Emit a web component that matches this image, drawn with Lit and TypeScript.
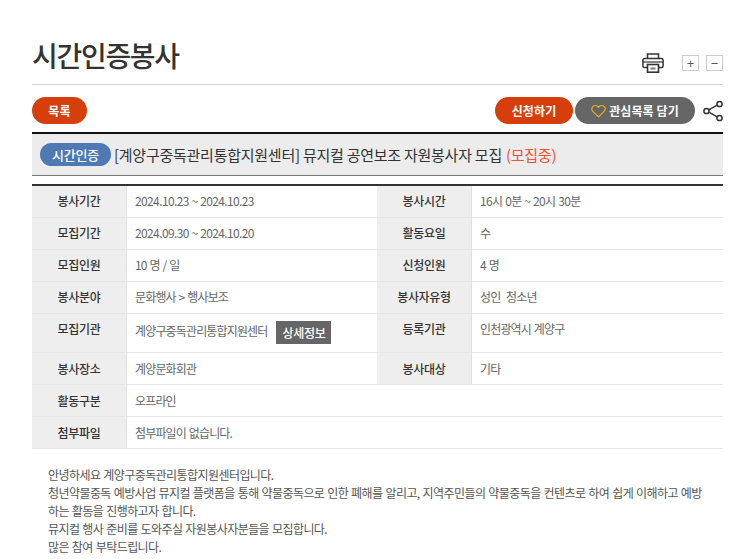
import { LitElement, html, css } from "lit";
import { customElement } from "lit/decorators.js";

@customElement("app-root")
export class AppRoot extends LitElement {
  static styles = css`
    :host { display: block; font-family: "Noto Sans CJK KR", "Noto Sans", sans-serif; color: #333; }
    .page { padding: 0 20px 0 32px; height: 559px; overflow: hidden; box-sizing: border-box; }
    .head { display: flex; align-items: flex-end; height: 84px; border-bottom: 1px solid #d2d2d2; box-sizing: content-box; }
    h1 { margin: 0 auto 0 0; font-size: 28px; font-weight: 500; letter-spacing: -1.3px; line-height: 40px; padding-bottom: 9px; color: #333; }
    .tools { display: flex; align-items: center; padding-bottom: 11px; }
    .printer { width: 22px; height: 20px; margin-right: 18px; display: block; }
    .zoom { width: 17px; height: 16px; box-sizing: border-box; border: 1px solid #ccc; background: #fff; display: flex; align-items: center; justify-content: center; margin-left: 7px; color: #555; font-size: 13px; line-height: 1; font-family: "Liberation Sans", sans-serif; }
    .printer + .zoom { margin-left: 0; }
    .actions { display: flex; align-items: center; height: 27px; margin-top: 12px; }
    .btn { height: 27px; border-radius: 14px; color: #fff; font-size: 12px; font-weight: 700; display: flex; align-items: center; justify-content: center; letter-spacing: 0.1px; box-sizing: border-box; }
    .red { background: #d63f0c; }
    .list { width: 55px; margin-right: auto; }
    .apply { width: 78px; margin-right: 2px; }
    .gray { background: #666; width: 120px; gap: 3px; }
    .share { width: 20px; height: 22px; margin-left: 8px; display: block; }
    .heart { width: 15px; height: 14px; display: block; }
    .subject { margin-top: 8px; height: 41px; box-sizing: content-box; border-top: 2px solid #111; border-bottom: 1px solid #777; background: #ececec; display: flex; align-items: center; padding-left: 8px; font-size: 15px; letter-spacing: -0.25px; color: #333; white-space: pre; }
    .tag { width: 71px; height: 23px; border-radius: 12px; background: #4f79b2; color: #fff; font-size: 13px; font-weight: 500; display: flex; align-items: center; justify-content: center; margin-right: 3px; flex: none; letter-spacing: -0.2px; }
    .status { color: #f0533a; margin-left: 4px; }
    table { border-collapse: separate; border-spacing: 0; width: 691px; table-layout: fixed; margin-top: 8px; border-top: 2px solid #333; font-size: 12px; letter-spacing: -0.85px; word-spacing: 1px; }
    th, td { border-bottom: 1px solid #e6e6e6; box-sizing: border-box; height: 32px; padding: 0 0 2px 0; }
    th { background: #eee; font-weight: 500; color: #333; text-align: center; border-right: 1px solid #e0e0e0; letter-spacing: -0.3px; }
    td { padding-left: 8px; color: #666; }
    td.date { letter-spacing: -0.62px; word-spacing: 0.6px; }
    .low td, .low th { padding-bottom: 0; }
    .org td, .org th { height: 39px; vertical-align: top; padding-top: 5px; padding-bottom: 0; line-height: 20px; }
    .org td.hasbtn { padding-top: 7px; }
    .cell { display: flex; align-items: flex-start; line-height: 20px; }
    .detail { background: #666; color: #fff; font-weight: 500; height: 23px; width: 55px; display: flex; align-items: center; justify-content: center; margin-left: 9px; flex: none; letter-spacing: -0.3px; }
    .body { margin: 17px 0 0 16px; width: 656px; font-size: 12px; line-height: 18px; color: #555; letter-spacing: -0.57px; word-spacing: 0.8px; }
    .body p { margin: 0; }
  `;

  render() {
    const r = (a: string, b: string, c: string, d: string, dl = false, dr = false) => html`<tr><th>${a}</th><td class=${dl ? "date" : ""}>${b}</td><th>${c}</th><td class=${dr ? "date" : ""}>${d}</td></tr>`;
    return html`<div class="page">
      <div class="head">
        <h1>시간인증봉사</h1>
        <div class="tools">
          <svg class="printer" viewBox="0 0 22 20" fill="none" stroke="#333" stroke-width="1.5">
            <path d="M5.5 5.5V1h11v4.5"/>
            <path d="M5 14.5H2.5a1.6 1.6 0 0 1-1.6-1.6V7.2a1.6 1.6 0 0 1 1.6-1.6h17a1.6 1.6 0 0 1 1.6 1.6v5.7a1.6 1.6 0 0 1-1.6 1.6H17"/>
            <path d="M1 9h20" stroke-width="1.2"/>
            <rect x="5.5" y="11.5" width="11" height="7.7" stroke-width="1.6"/>
            <path d="M8.5 15.5h5" stroke-width="2" stroke="#777"/>
          </svg>
          <div class="zoom">+</div>
          <div class="zoom">−</div>
        </div>
      </div>
      <div class="actions">
        <div class="btn red list">목록</div>
        <div class="btn red apply">신청하기</div>
        <div class="btn gray">
          <svg class="heart" viewBox="0 0 14 13" fill="none" stroke="#e0b020" stroke-width="1.1"><path d="M7 12 1.8 6.8a3.2 3.2 0 0 1 0-4.5 3.1 3.1 0 0 1 4.4 0l.8.8.8-.8a3.1 3.1 0 0 1 4.4 0 3.2 3.2 0 0 1 0 4.5z"/></svg>
          <span>관심목록 담기</span>
        </div>
        <svg class="share" viewBox="0 0 20 22" fill="none" stroke="#333" stroke-width="1.5">
          <circle cx="3.5" cy="11" r="2.6"/><circle cx="16.5" cy="4" r="2.6"/><circle cx="16.5" cy="18" r="2.6"/>
          <path d="M5.8 9.8 14.2 5.2M5.8 12.2l8.4 4.6"/>
        </svg>
      </div>
      <div class="subject"><span class="tag">시간인증</span><span>[계양구중독관리통합지원센터] 뮤지컬 공연보조 자원봉사자 모집</span><span class="status">(모집중)</span></div>
      <table>
        <colgroup><col style="width:95px"/><col style="width:250px"/><col style="width:95px"/><col/></colgroup>
        ${r("봉사기간", "2024.10.23 ~ 2024.10.23", "봉사시간", "16시 0분 ~ 20시 30분", true, true)}
        ${r("모집기간", "2024.09.30 ~ 2024.10.20", "활동요일", "수", true)}
        ${r("모집인원", "10 명 / 일", "신청인원", "4 명")}
        ${r("봉사분야", "문화행사 > 행사보조", "봉사자유형", "성인\u00a0\u00a0청소년")}
        <tr class="org"><th>모집기관</th><td class="hasbtn"><div class="cell"><span>계양구중독관리통합지원센터</span><span class="detail">상세정보</span></div></td><th>등록기관</th><td>인천광역시 계양구</td></tr>
        <tr class="low"><th>봉사장소</th><td>계양문화회관</td><th>봉사대상</th><td>기타</td></tr>
        <tr class="low"><th>활동구분</th><td colspan="3">오프라인</td></tr>
        <tr class="low"><th>첨부파일</th><td colspan="3">첨부파일이 없습니다.</td></tr>
      </table>
      <div class="body">
        <p>안녕하세요 계양구중독관리통합지원센터입니다.</p>
        <p>청년약물중독 예방사업 뮤지컬 플랫폼을 통해 약물중독으로 인한 폐해를 알리고, 지역주민들의 약물중독을 컨텐츠로 하여 쉽게 이해하고 예방하는 활동을 진행하고자 합니다.</p>
        <p>뮤지컬 행사 준비를 도와주실 자원봉사자분들을 모집합니다.</p>
        <p>많은 참여 부탁드립니다.</p>
      </div>
    </div>`;
  }
}
